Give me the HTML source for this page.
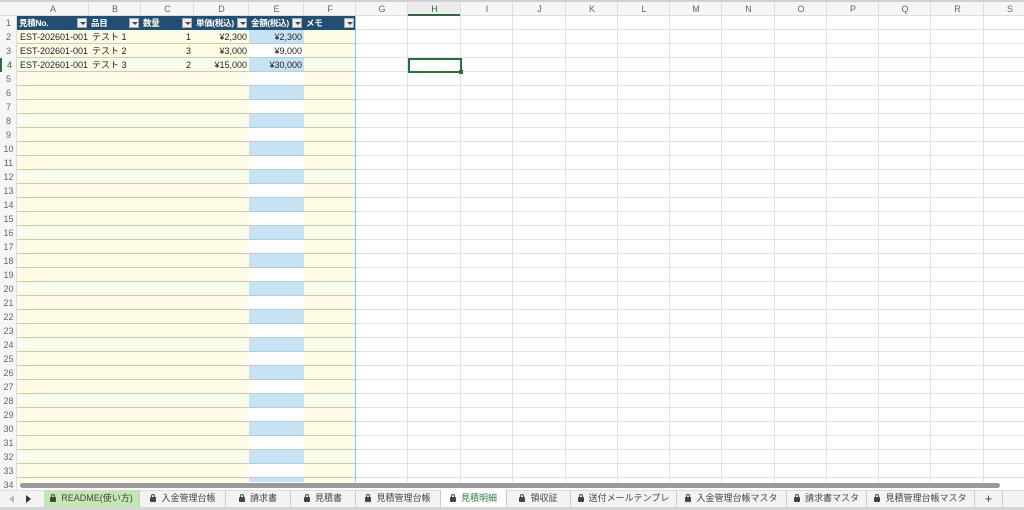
<!DOCTYPE html>
<html><head><meta charset="utf-8"><style>
*{margin:0;padding:0;box-sizing:border-box}
body{width:1024px;height:510px;overflow:hidden;background:#fff;font-family:"Liberation Sans","Noto Sans CJK JP",sans-serif;position:relative}
.a{position:absolute}
.ch{position:absolute;top:2px;height:14px;font-size:9px;color:#666;text-align:center;line-height:14px}
.rh{position:absolute;left:0;width:17px;font-size:9px;color:#666;text-align:center;line-height:14px}
.t{position:absolute;font-size:9px;color:#222;line-height:14px;white-space:nowrap}
.hd{position:absolute;top:16px;height:14px;background:#234e70;color:#fff;font-weight:bold;font-size:8.5px;line-height:14px;padding-left:2px;white-space:nowrap;letter-spacing:-0.3px}
.dd{position:absolute;top:2px;right:2px;width:10px;height:10px;background:#eef0f2;border:1px solid #aaa}
.dd:after{content:"";position:absolute;left:2px;top:3px;border-left:3px solid transparent;border-right:3px solid transparent;border-top:3px solid #444}
.tab{position:absolute;top:490px;height:17px;font-size:9px;color:#444;line-height:17px;text-align:center;border-right:1px solid #ccc;white-space:nowrap}
.lk{display:inline-block;width:6px;height:5px;background:#444;border-radius:1px;position:relative;margin-right:5px;vertical-align:-1px}
.lk:before{content:"";position:absolute;left:1px;top:-3px;width:2px;height:3px;border:1px solid #444;border-bottom:none;border-radius:2px 2px 0 0}
</style></head><body>
<div class="a" style="left:0;top:0;width:1024px;height:2px;background:#d0d0d0"></div>
<div class="a" style="left:0;top:2px;width:1024px;height:14px;background:#f6f6f6;border-bottom:1px solid #ddd"></div>
<div class="a" style="left:0;top:16px;width:17px;height:474px;background:#f6f6f6;border-right:1px solid #ddd"></div>
<div id="g"></div>
<script>
var cols=[17,89,141,194,249,304,356,408,461,513,566,618,670,722,775,827,879,931,984,1036];
var L="ABCDEFGHIJKLMNOPQRS";var h="";
for(var i=0;i<19;i++){var x=cols[i],w=cols[i+1]-x;
h+='<div class="ch" style="left:'+x+'px;width:'+w+'px;'+(i==7?'border-bottom:2px solid #2e6b3f;color:#2e6b3f;background:#ececec':'')+'">'+L[i]+'</div>';
h+='<div class="a" style="left:'+(cols[i+1]-1)+'px;top:2px;width:1px;height:14px;background:#ddd"></div>';
if(i>=6)h+='<div class="a" style="left:'+(cols[i+1]-1)+'px;top:16px;width:1px;height:466px;background:#e2e2e2"></div>';}
for(var r=1;r<=34;r++){var y=16+(r-1)*14;
h+='<div class="rh" style="top:'+y+'px;'+(r==4?'color:#2e6b3f;border-left:2px solid #2e6b3f':'')+'">'+r+'</div>';
h+='<div class="a" style="left:356px;top:'+(y+13)+'px;width:668px;height:1px;background:#e2e2e2"></div>';
if(r>1){h+='<div class="a" style="left:17px;top:'+y+'px;width:232px;height:14px;background:#fefbe6;border-bottom:1px solid #a9d2e4"></div>';
h+='<div class="a" style="left:249px;top:'+y+'px;width:55px;height:14px;background:'+(r%2==0?'#c6e2f3':'#fff')+';border-bottom:1px solid #a9d2e4"></div>';
h+='<div class="a" style="left:304px;top:'+y+'px;width:52px;height:14px;background:#fefbe6;border-bottom:1px solid #a9d2e4"></div>';}}
var hds=["見積No.","品目","数量","単価(税込)","金額(税込)","メモ"];
for(var i=0;i<6;i++){h+='<div class="hd" style="left:'+cols[i]+'px;width:'+(cols[i+1]-cols[i])+'px">'+hds[i]+'<div class="dd"></div></div>';}
var d=[["1","¥2,300","¥2,300"],["3","¥3,000","¥9,000"],["2","¥15,000","¥30,000"]];
for(var k=0;k<3;k++){var y=30+k*14;
h+='<div class="t" style="left:20px;top:'+y+'px">EST-202601-001</div><div class="t" style="left:92px;top:'+y+'px">テスト '+(k+1)+'</div>';
h+='<div class="t" style="left:141px;width:50px;text-align:right;top:'+y+'px">'+d[k][0]+'</div>';
h+='<div class="t" style="left:194px;width:53px;text-align:right;top:'+y+'px">'+d[k][1]+'</div>';
h+='<div class="t" style="left:249px;width:53px;text-align:right;top:'+y+'px">'+d[k][2]+'</div>';}
h+='<div class="a" style="left:355px;top:16px;width:1px;height:466px;background:#8cc0dc"></div>';
h+='<div class="a" style="left:408px;top:58px;width:54px;height:15px;border:2px solid #2e6b3f"></div><div class="a" style="left:459px;top:70px;width:4px;height:4px;background:#2e6b3f"></div>';
document.getElementById("g").innerHTML=h;
</script>
<div class="a" style="left:17px;top:482px;width:1007px;height:8px;background:#fff"></div>
<div class="a" style="left:20px;top:483px;width:980px;height:5px;background:#9a9a9a;border-radius:3px"></div>
<div class="a" style="left:0;top:490px;width:1024px;height:20px;background:#f3f3f3;border-top:1px solid #ddd"></div>
<div class="a" style="left:0;top:507px;width:1024px;height:3px;background:#d6d6d6"></div>
<div class="a" style="left:9px;top:495px;border-right:5px solid #bbb;border-top:4px solid transparent;border-bottom:4px solid transparent"></div>
<div class="a" style="left:26px;top:495px;border-left:5px solid #333;border-top:4px solid transparent;border-bottom:4px solid transparent"></div>
<div class="tab" style="left:44px;width:96px;background:#c3e6b4"><span class="lk"></span>README(使い方)</div>
<div class="tab" style="left:141px;width:85px"><span class="lk"></span>入金管理台帳</div>
<div class="tab" style="left:226px;width:65px"><span class="lk"></span>請求書</div>
<div class="tab" style="left:291px;width:65px"><span class="lk"></span>見積書</div>
<div class="tab" style="left:356px;width:85px"><span class="lk"></span>見積管理台帳</div>
<div class="tab" style="left:441px;width:66px;background:#fff;color:#2e7d3f"><span class="lk"></span>見積明細</div>
<div class="tab" style="left:507px;width:64px"><span class="lk"></span>領収証</div>
<div class="tab" style="left:571px;width:106px"><span class="lk"></span>送付メールテンプレ</div>
<div class="tab" style="left:677px;width:110px"><span class="lk"></span>入金管理台帳マスタ</div>
<div class="tab" style="left:787px;width:80px"><span class="lk"></span>請求書マスタ</div>
<div class="tab" style="left:867px;width:108px;overflow:hidden"><span class="lk"></span>見積管理台帳マスタ</div>
<div class="tab" style="left:975px;width:28px;font-size:13px">+</div>
</body></html>
